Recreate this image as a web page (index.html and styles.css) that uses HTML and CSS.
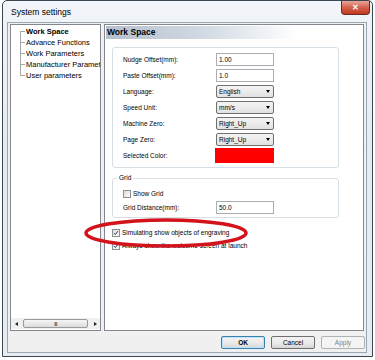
FILE: index.html
```html
<!DOCTYPE html>
<html>
<head>
    <title>System settings</title>
    <link rel="stylesheet" href="styles.css">
</head>
<body>
    <div class="window">
        <div class="titlebar">
            <span class="title">System settings</span>
            <div class="close">&#x2715;</div>
        </div>
        <div class="client">
            <div class="panes">
                <div class="tree">
                    <ul class="tree-list">
                        <li class="selected">Work Space</li>
                        <li>Advance Functions</li>
                        <li>Work Parameters</li>
                        <li>Manufacturer Paramet</li>
                        <li>User parameters</li>
                    </ul>
                    <div class="hscroll">
                        <span class="arrow left"></span>
                        <div class="thumb"><span class="grip">III</span></div>
                        <span class="arrow right"></span>
                    </div>
                </div>
                <div class="page">
                    <div class="page-head">Work Space</div>
                    <div class="group">
                        <div class="row"><span class="lbl">Nudge Offset(mm):</span><div class="edit">1.00</div></div>
                        <div class="row"><span class="lbl">Paste Offset(mm):</span><div class="edit">1.0</div></div>
                        <div class="row"><span class="lbl">Language:</span><div class="combo">English<span class="drop"></span></div></div>
                        <div class="row"><span class="lbl">Speed Unit:</span><div class="combo">mm/s<span class="drop"></span></div></div>
                        <div class="row"><span class="lbl">Machine Zero:</span><div class="combo">Right_Up<span class="drop"></span></div></div>
                        <div class="row"><span class="lbl">Page Zero:</span><div class="combo">Right_Up<span class="drop"></span></div></div>
                        <div class="row color-row"><span class="lbl">Selected Color:</span><div class="swatch"></div></div>
                    </div>
                    <fieldset class="grid-group">
                        <legend>Grid</legend>
                        <div class="row"><span class="check"></span><span class="check-text">Show Grid</span></div>
                        <div class="row"><span class="lbl">Grid Distance(mm):</span><div class="edit">50.0</div></div>
                    </fieldset>
                    <div class="opt first"><span class="check on"><svg width="8" height="8" viewBox="0 0 8 8"><path d="M1.5 4.2 L3.2 6 L6.6 1.5" fill="none" stroke="#1e3a6e" stroke-width="1.3"/></svg></span><span class="check-text">Simulating show objects of engraving</span></div>
                    <div class="opt"><span class="check on"><svg width="8" height="8" viewBox="0 0 8 8"><path d="M1.5 4.2 L3.2 6 L6.6 1.5" fill="none" stroke="#1e3a6e" stroke-width="1.3"/></svg></span><span class="check-text">Always show the welcome screen at launch</span></div>
                </div>
            </div>
            <div class="buttons">
                <div class="btn default">OK</div>
                <div class="btn">Cancel</div>
                <div class="btn disabled">Apply</div>
            </div>
        </div>
        <svg class="mark" width="170" height="34" viewBox="0 0 170 34">
            <ellipse cx="85" cy="17" rx="80" ry="13" fill="none" stroke="#d3121c" stroke-width="3.5"/>
        </svg>
    </div>
</body>
</html>
```

FILE: styles.css
```css
* {
    margin: 0;
    padding: 0;
    box-sizing: border-box
}

body {
    background-color: #fff;
    font-family: "Liberation Sans", Arial, sans-serif;
    color: #000
}

.window {
    position: relative;
    margin-left: 2px;
    width: 371px;
    height: 357px;
    border: 1px solid #3a4652;
    border-radius: 5px 5px 0 0;
    background: linear-gradient(#f2f5f9, #e4ebf2 40%, #e6ecf2);
    padding: 0 5px 3px 4px
}

.titlebar {
    height: 21px;
    display: flex;
    align-items: center
}

.title {
    font-size: 8.5px;
    padding-left: 4px;
    margin-top: 1px
}

.close {
    margin-left: auto;
    margin-right: -3px;
    align-self: flex-start;
    width: 29px;
    height: 14px;
    border: 1px solid #6b2a22;
    border-top: none;
    border-radius: 0 0 4px 4px;
    background: linear-gradient(#e8a598, #d3614d 50%, #c2381f);
    color: #fff;
    font-size: 8px;
    font-weight: bold;
    display: flex;
    justify-content: center;
    align-items: center
}

.client {
    height: 331px;
    border: 1px solid #9aa6b2;
    background-color: #f0f0f0;
    padding: 1px 1px 0 2px
}

.panes {
    height: 307px;
    display: flex;
    gap: 3px
}

.tree {
    width: 91px;
    border: 1px solid #828790;
    background-color: #fff;
    display: flex;
    flex-direction: column;
    overflow: hidden
}

.tree-list {
    list-style: none;
    flex: 1;
    padding: 1px 0 0 9px;
    font-size: 7.5px
}

.tree-list li {
    height: 11px;
    line-height: 11px;
    padding-left: 6px;
    white-space: nowrap;
    background:
        linear-gradient(#a8a8a8, #a8a8a8) no-repeat 0 50% / 5px 1px,
        linear-gradient(#a8a8a8, #a8a8a8) no-repeat 0 0 / 1px 100%
}

.tree-list li:first-child {
    background:
        linear-gradient(#a8a8a8, #a8a8a8) no-repeat 0 50% / 5px 1px,
        linear-gradient(#a8a8a8, #a8a8a8) no-repeat 0 5px / 1px 100%
}

.tree-list li:last-child {
    background:
        linear-gradient(#a8a8a8, #a8a8a8) no-repeat 0 50% / 5px 1px,
        linear-gradient(#a8a8a8, #a8a8a8) no-repeat 0 0 / 1px 50%
}

.tree-list li.selected {
    font-weight: bold
}

.hscroll {
    height: 11px;
    margin: 0 0 1px 0;
    display: flex;
    align-items: center;
    background-color: #f0f0f0
}

.arrow {
    width: 10px;
    display: flex;
    justify-content: center
}

.arrow.left::before,
.arrow.right::before {
    content: "";
    border-top: 2.5px solid transparent;
    border-bottom: 2.5px solid transparent
}

.arrow.left::before {
    border-right: 3px solid #222
}

.arrow.right::before {
    border-left: 3px solid #222
}

.thumb {
    flex: 1;
    height: 9px;
    margin: 0 2px;
    border: 1px solid #9a9a9a;
    border-radius: 2px;
    background: linear-gradient(#f6f6f6, #dcdcdc);
    display: flex;
    justify-content: center;
    align-items: center
}

.grip {
    font-size: 5px;
    font-weight: bold;
    color: #555;
    letter-spacing: -0.5px
}

.page {
    width: 260px;
    border: 1px solid #828790;
    background-color: #fff;
    padding: 1px 1px 0 1px
}

.page-head {
    height: 13px;
    line-height: 13px;
    font-size: 8.5px;
    font-weight: bold;
    padding-left: 1px;
    background: linear-gradient(90deg, #b5c0cd, #d3dbe4 40%, #fff 75%)
}

.group {
    margin: 8px 0 0 6px;
    width: 227px;
    border: 1px solid #d5dfe5;
    border-radius: 3px;
    padding: 5px 0 4px 10px;
    display: flex;
    flex-direction: column;
    gap: 3px
}

.row {
    height: 13px;
    display: flex;
    align-items: center;
    font-size: 6.5px
}

.lbl {
    width: 93px
}

.edit,
.combo {
    width: 58px;
    height: 13px;
    border: 1px solid #abadb3;
    background-color: #fff;
    font-size: 6.5px;
    padding-left: 2px;
    display: flex;
    align-items: center
}

.combo {
    border-color: #707070;
    border-radius: 2px;
    background: linear-gradient(#f4f4f4, #e2e2e2)
}

.drop {
    margin-left: auto;
    margin-right: 3px;
    border-left: 2.5px solid transparent;
    border-right: 2.5px solid transparent;
    border-top: 3px solid #000
}

.color-row {
    height: 15px;
    margin-top: -1px
}

.swatch {
    width: 59px;
    height: 15px;
    margin-left: -1px;
    background-color: #ff0000
}

.grid-group {
    margin: 6px 0 0 6px;
    width: 227px;
    border: 1px solid #d5dfe5;
    border-radius: 3px;
    padding: 5px 0 3px 10px;
    display: flex;
    flex-direction: column;
    gap: 1px
}

.grid-group legend {
    font-size: 6.5px;
    line-height: 8px;
    padding: 0 2px;
    margin-left: -6px
}

.check {
    width: 8px;
    height: 8px;
    border: 1px solid #8e8f8f;
    background: linear-gradient(135deg, #dcdcdc, #fbfbfb);
    display: inline-flex;
    justify-content: center;
    align-items: center
}

.check svg {
    display: block
}

.check-text {
    padding-left: 2px
}

.opt {
    height: 13px;
    display: flex;
    align-items: center;
    font-size: 6.5px;
    margin-left: 6px
}

.opt.first {
    margin-top: 8px
}

.buttons {
    margin-top: 5px;
    display: flex;
    justify-content: flex-end;
    gap: 6px
}

.btn {
    width: 44px;
    height: 13px;
    border: 1px solid #707070;
    border-radius: 2px;
    background: linear-gradient(#f2f2f2, #ebebeb 50%, #d6d6d6);
    font-size: 6.5px;
    display: flex;
    justify-content: center;
    align-items: center
}

.btn.default {
    border-color: #3c7fb1;
    box-shadow: inset 0 0 0 1px #bfe4f9;
    font-weight: bold
}

.btn.disabled {
    border-color: #adb2b5;
    background: #f4f4f4;
    color: #838383
}

.mark {
    position: absolute;
    left: 78px;
    top: 215px
}
```
